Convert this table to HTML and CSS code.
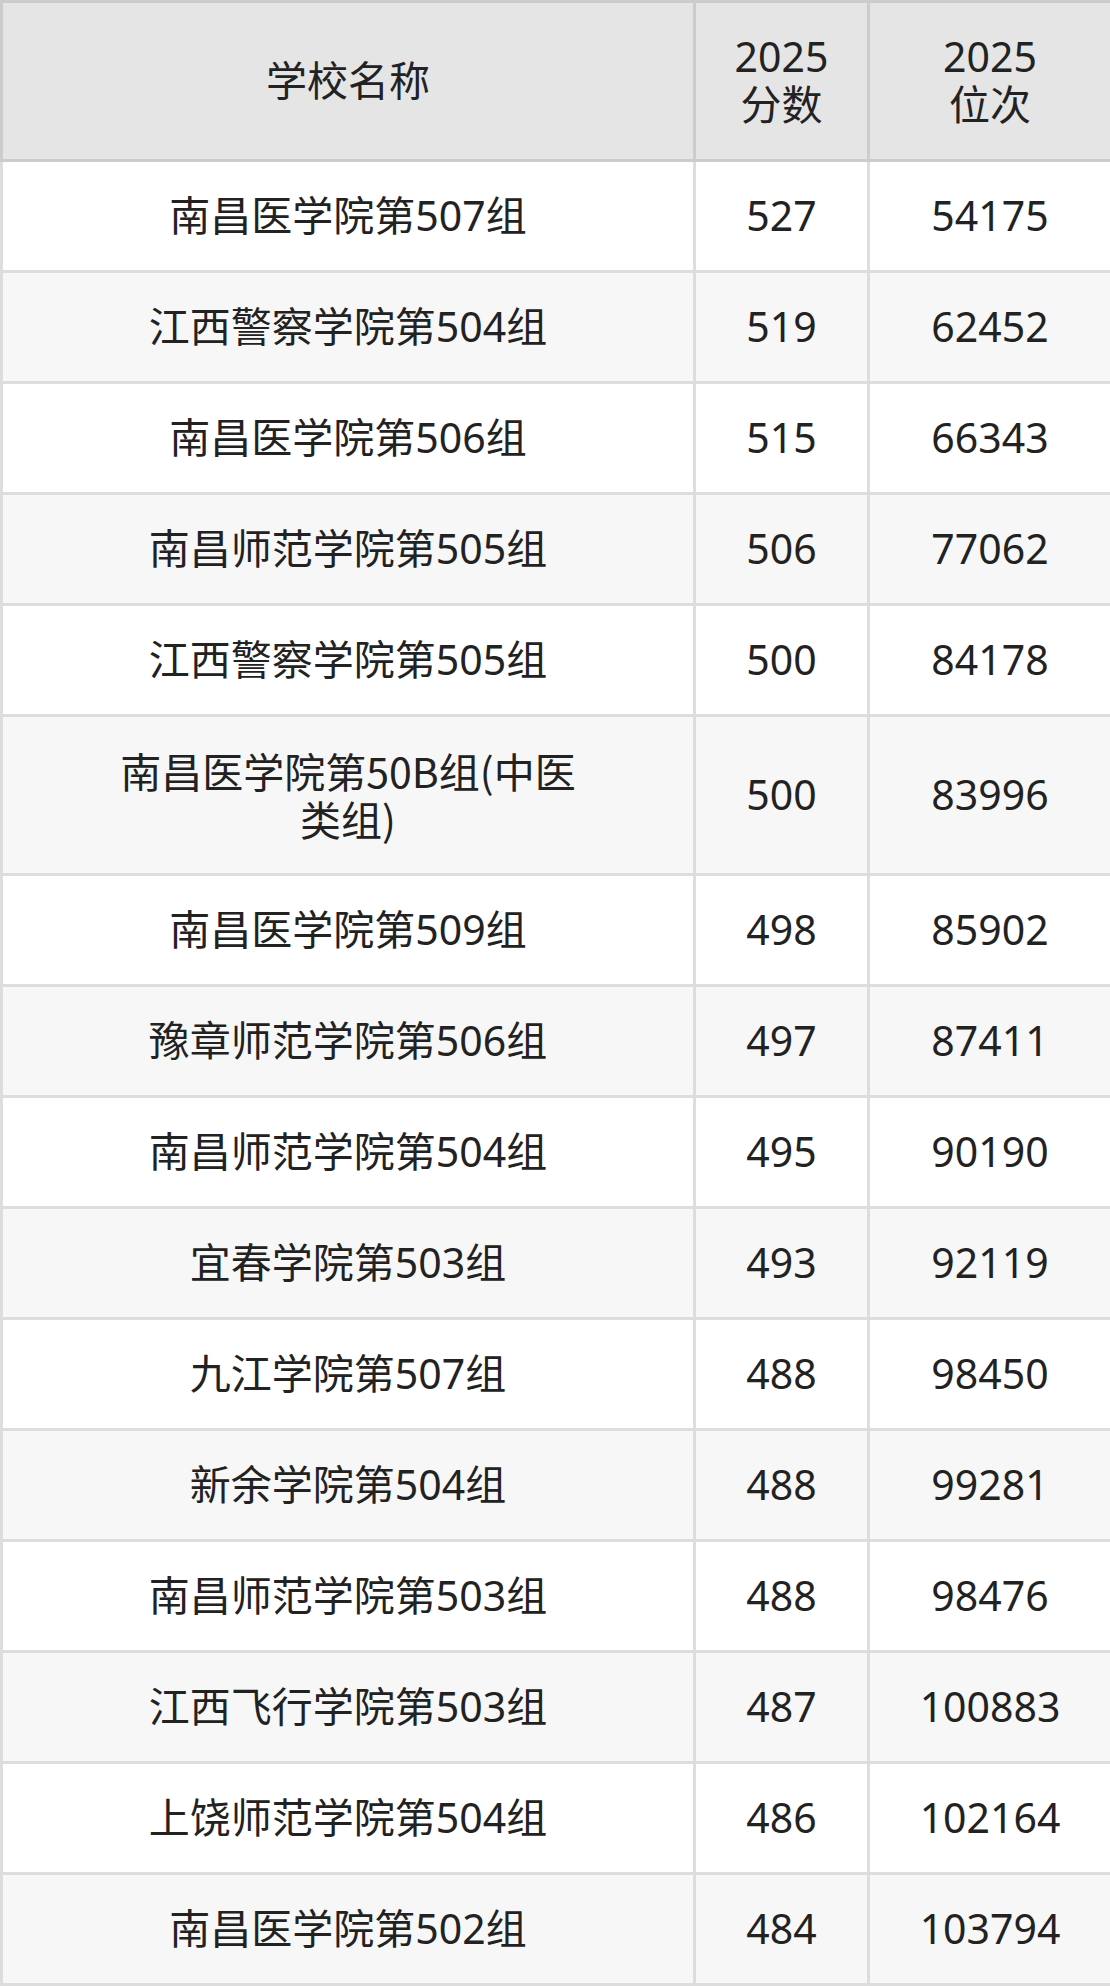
FILE: index.html
```html
<!DOCTYPE html>
<html lang="zh-CN">
<head>
<meta charset="utf-8">
<title>2025 分数 位次</title>
<link rel="stylesheet" href="styles.css">
</head>
<body>
<table class="score-table">
  <colgroup>
    <col class="col-name">
    <col class="col-score">
    <col class="col-rank">
  </colgroup>
  <thead>
    <tr>
      <th>学校名称</th>
      <th>2025<br>分数</th>
      <th>2025<br>位次</th>
    </tr>
  </thead>
  <tbody>
    <tr><td class="name">南昌医学院第507组</td><td>527</td><td>54175</td></tr>
    <tr><td class="name">江西警察学院第504组</td><td>519</td><td>62452</td></tr>
    <tr><td class="name">南昌医学院第506组</td><td>515</td><td>66343</td></tr>
    <tr><td class="name">南昌师范学院第505组</td><td>506</td><td>77062</td></tr>
    <tr><td class="name">江西警察学院第505组</td><td>500</td><td>84178</td></tr>
    <tr><td class="name name-cjk">南昌医学院第50B组(中医类组)</td><td>500</td><td>83996</td></tr>
    <tr><td class="name">南昌医学院第509组</td><td>498</td><td>85902</td></tr>
    <tr><td class="name">豫章师范学院第506组</td><td>497</td><td>87411</td></tr>
    <tr><td class="name">南昌师范学院第504组</td><td>495</td><td>90190</td></tr>
    <tr><td class="name">宜春学院第503组</td><td>493</td><td>92119</td></tr>
    <tr><td class="name">九江学院第507组</td><td>488</td><td>98450</td></tr>
    <tr><td class="name">新余学院第504组</td><td>488</td><td>99281</td></tr>
    <tr><td class="name">南昌师范学院第503组</td><td>488</td><td>98476</td></tr>
    <tr><td class="name">江西飞行学院第503组</td><td>487</td><td>100883</td></tr>
    <tr><td class="name">上饶师范学院第504组</td><td>486</td><td>102164</td></tr>
    <tr><td class="name">南昌医学院第502组</td><td>484</td><td>103794</td></tr>
  </tbody>
</table>
</body>
</html>
```

FILE: styles.css
```css
html, body {
  margin: 0;
  padding: 0;
  background: #ffffff;
}

.score-table {
  width: 1110px;
  table-layout: fixed;
  border-collapse: collapse;
  font-family: "Noto Sans", "Open Sans", "Noto Sans CJK SC", sans-serif;
  font-size: 41px;
  line-height: 48px;
  color: #222222;
}

.col-name { width: 693px; }
.col-score { width: 174px; }
.col-rank { width: 243px; }

.score-table th,
.score-table td {
  padding: 29px 0 31px;
  text-align: center;
  vertical-align: middle;
  font-weight: 400;
}

.score-table th {
  background: #e5e5e5;
  border: 3px solid #cccccc;
}

.score-table td {
  border: 3px solid #dddddd;
}

.score-table td.name {
  padding-left: 105px;
  padding-right: 105px;
}

.score-table td.name-cjk {
  font-family: "Noto Sans CJK SC", sans-serif;
}

.score-table tbody tr:nth-child(even) td {
  background: #f7f7f7;
}
```
